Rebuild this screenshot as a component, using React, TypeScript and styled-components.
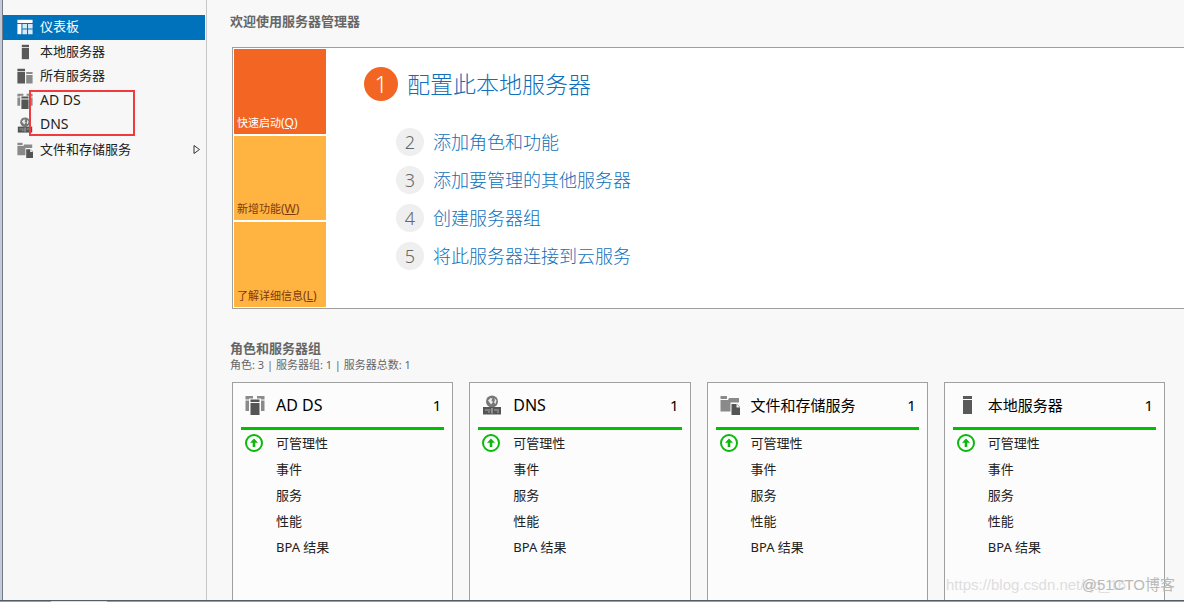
import React from "react";
import styled, { createGlobalStyle } from "styled-components";

const GlobalStyle = createGlobalStyle`
  *, *::before, *::after { box-sizing: border-box; }
  body {
    margin: 0;
    background: #f8f8f8;
    color: #222;
    font-family: "Noto Sans", "Noto Sans CJK SC", sans-serif;
    font-size: 13px;
    line-height: 16px;
  }
  h1, h2, h3, p, ul, ol { margin: 0; padding: 0; }
  ul, ol { list-style: none; }
  a { color: inherit; text-decoration: none; }
  button { font: inherit; border: 0; cursor: pointer; }
`;

/* ---------- icons ---------- */

type IconName = "dashboard" | "server" | "servers" | "adds" | "dns" | "files";

const Svg = styled.svg<{ $size: number }>`
  display: block;
  flex: none;
  width: ${(p) => p.$size}px;
  height: ${(p) => p.$size}px;
`;

const shapes: Record<IconName, React.ReactNode> = {
  dashboard: (
    <g fill="#fff">
      <path d="M0.500 1h19v4h-19z" />
      <path d="M0.500 6.200h5v12.800h-5z" />
      <path d="M6.800 6.200h5.700v5.700H6.800zM13.800 6.200h5.700v5.700h-5.700zM6.800 13h5.700v6H6.800zM13.800 13h5.700v6h-5.700z" opacity=".85" />
    </g>
  ),
  server: (
    <g fill="#595959">
      <path d="M6 1h9v3H6z" />
      <path d="M6 5h9v14H6z" />
    </g>
  ),
  servers: (
    <g>
      <path d="M0.500 1h9.500v3H0.500zM0.500 5h9.500v14.500H0.500z" fill="#595959" />
      <path d="M11.500 5h8v2.500h-8zM11.500 8.700h8v10.800h-8z" fill="#8a8a8a" />
    </g>
  ),
  adds: (
    <g>
      <path d="M0.500 1h7.500v2.500H4v1H0.500zM0.500 5.500H4V16H0.500zM12 1h7.500v3.500H16v-1h-4zM16 5.500h3.500V16H16z" fill="#8a8a8a" />
      <path d="M5.500 4.500h9v2.500h-9zM5.500 8h9v12h-9z" fill="#555" />
    </g>
  ),
  dns: (
    <g>
      <circle cx="10" cy="6.500" r="6" fill="#777" />
      <path d="M6 5.500l2.500-2.500 2 .5-1 2 1.500 1.500-2 2.500-1.500-2zM12.500 3l2 2.500-1 3.500-1.500-1.500.8-2z" fill="#e8e8e8" />
      <path d="M1 12h18v7.500H1z" fill="#555" />
      <path d="M9.500 13h1v5.500h-1z" fill="#ccc" />
      <path d="M3 15h5.500M12 15h5" stroke="#aaa" />
      <path d="M6 17h2M15 17h2" stroke="#aaa" />
    </g>
  ),
  files: (
    <g>
      <path d="M0.500 1h6.500v3H0.500z" fill="#8a8a8a" />
      <path d="M0.500 5h7.500l1-2h10v4.500h-8.500V16.500H0.500z" fill="#8a8a8a" />
      <path d="M11.500 9H17l3 3v8h-8.500z" fill="#555" />
      <path d="M16.500 8.500v4H20z" fill="#eee" />
    </g>
  ),
};

const Icon = ({ name, size }: { name: IconName; size: number }) => (
  <Svg $size={size} viewBox="0 0 20 20" aria-hidden="true">
    {shapes[name]}
  </Svg>
);

const HealthIcon = () => (
  <Svg $size={18} viewBox="0 0 18 18" aria-hidden="true">
    <circle cx="9" cy="9" r="8" fill="#fff" stroke="#0bb80b" strokeWidth="2" />
    <path d="M9 4.500L5 8.800h2.700v4.200h2.600V8.800H13z" fill="#0bb80b" />
  </Svg>
);

/* ---------- frame ---------- */

const Page = styled.div`
  position: relative;
`;

const Shell = styled.div`
  display: flex;
  flex-direction: column;
  min-height: 100vh;
`;

const Window = styled.div`
  flex: 1;
  display: flex;
  border-left: 2px solid #c3cbd9;
`;

const Taskbar = styled.div`
  height: 2px;
  padding-left: 51px;
  background: #62afd0;
  border-top: 1px solid #555c63;
`;

const TaskbarItem = styled.div`
  width: 56px;
  height: 1px;
  background: #d5dde2;
`;

/* ---------- sidebar ---------- */

const Sidebar = styled.nav`
  flex: none;
  position: relative;
  width: 205px;
  padding-top: 15px;
  background: #f7f7f7;
  border-left: 1px solid #747b86;
  border-right: 1px solid #c6c6c6;
`;

const NavList = styled.ul`
  display: grid;
  grid-auto-rows: 1fr;
  height: 147px;
`;

const NavLink = styled.a<{ $active?: boolean; $latin?: boolean }>`
  display: flex;
  align-items: center;
  gap: 7px;
  height: 100%;
  padding: 0 4px 0 14px;
  margin-right: 1px;
  font-size: ${(p) => (p.$latin ? 14 : 13)}px;
  color: ${(p) => (p.$active ? "#fff" : "#222")};
  background: ${(p) => (p.$active ? "#0072bc" : "transparent")};
`;

const NavText = styled.span`
  flex: 1;
  padding-bottom: 2px;
`;

const Highlight = styled.div`
  position: absolute;
  top: 90px;
  left: 26px;
  width: 106px;
  height: 46px;
  border: 2px solid #f03a3e;
`;

/* ---------- main ---------- */

const Main = styled.main`
  flex: 1;
  min-width: 0;
  display: flex;
  flex-direction: column;
  padding: 13px 0 0 23px;
`;

const SectionTitle = styled.h2`
  font-size: 13px;
  line-height: 16px;
  font-weight: 700;
  color: #666;
`;

const Welcome = styled.section`
  display: flex;
  margin: 18px 0 31px 2px;
  height: 262px;
  padding: 1px;
  background: #fff;
  border: 1px solid #a0a0a0;
  border-right: 0;
`;

const Tiles = styled.div`
  flex: none;
  display: grid;
  grid-auto-rows: 1fr;
  gap: 2px;
  width: 92px;
`;

const Tile = styled.button<{ $primary?: boolean }>`
  display: flex;
  align-items: flex-end;
  padding: 0 3px 3px;
  font-size: 11px;
  line-height: 16px;
  white-space: nowrap;
  color: ${(p) => (p.$primary ? "#fff" : "#7d3a0c")};
  background: ${(p) => (p.$primary ? "#f26522" : "#ffb340")};
`;

const AccessKey = styled.span`
  font-size: 12px;
`;

const Steps = styled.div`
  padding: 18px 0 0 38px;
`;

const Step = styled.a<{ $lead?: boolean }>`
  display: flex;
  align-items: center;
  gap: 9px;
  font-weight: 300;
  font-size: ${(p) => (p.$lead ? 23 : 18)}px;
  line-height: 28px;
  color: #0f6fb8;
`;

const StepNumber = styled.span<{ $lead?: boolean }>`
  display: flex;
  align-items: center;
  justify-content: center;
  width: ${(p) => (p.$lead ? 34 : 28)}px;
  height: ${(p) => (p.$lead ? 34 : 28)}px;
  border-radius: 50%;
  color: ${(p) => (p.$lead ? "#fff" : "#666")};
  background: ${(p) => (p.$lead ? "#f26522" : "#efefef")};
`;

const StepList = styled.ol`
  display: grid;
  gap: 10px;
  padding: 27px 0 0 32px;
`;

const Summary = styled.p`
  padding-top: 1px;
  font-size: 11px;
  line-height: 16px;
  color: #666;
`;

const Cards = styled.div`
  flex: 1;
  display: grid;
  grid-template-columns: repeat(4, 1fr);
  gap: 16px;
  padding: 9px 19px 0 2px;
`;

const Card = styled.section`
  padding: 0 8px 40px;
  background: #fcfcfc;
  border: 1px solid #a0a0a0;
  border-bottom: 0;
`;

const CardHeader = styled.header`
  display: flex;
  align-items: center;
  gap: 11px;
  height: 47px;
  padding: 0 3px 0 4px;
  border-bottom: 3px solid #00c000;
  color: #000;
`;

const CardTitle = styled.h3<{ $latin?: boolean }>`
  flex: 1;
  font-size: ${(p) => (p.$latin ? 16 : 15)}px;
  line-height: 20px;
  font-weight: 400;
`;

const CardCount = styled.span`
  font-size: 15px;
  line-height: 20px;
`;

const CardRow = styled.a`
  display: grid;
  grid-template-columns: 18px 1fr;
  align-items: center;
  gap: 13px;
  height: 26px;
  padding-left: 4px;
`;

const CardRowText = styled.span`
  grid-column: 2;
`;

const Watermark = styled.div`
  position: absolute;
  right: 9px;
  bottom: 7px;
  display: grid;
  width: 229px;
  font-family: "Liberation Sans", "Noto Sans CJK SC", sans-serif;
  font-size: 15px;
  line-height: 20px;
  white-space: nowrap;
  pointer-events: none;
`;

const WatermarkText = styled.span<{ $strong?: boolean }>`
  grid-area: 1 / 1;
  justify-self: ${(p) => (p.$strong ? "end" : "start")};
  color: ${(p) => (p.$strong ? "#b9b9b9" : "#dedede")};
`;

/* ---------- data ---------- */

const navItems: { icon: IconName; text: string; active?: boolean; latin?: boolean; more?: boolean }[] = [
  { icon: "dashboard", text: "仪表板", active: true },
  { icon: "server", text: "本地服务器" },
  { icon: "servers", text: "所有服务器" },
  { icon: "adds", text: "AD DS", latin: true },
  { icon: "dns", text: "DNS", latin: true },
  { icon: "files", text: "文件和存储服务", more: true },
];

const tiles = [
  { text: "快速启动", accessKey: "Q", primary: true },
  { text: "新增功能", accessKey: "W" },
  { text: "了解详细信息", accessKey: "L" },
];

const steps = ["添加角色和功能", "添加要管理的其他服务器", "创建服务器组", "将此服务器连接到云服务"];

const cards: { icon: IconName; title: string; latin?: boolean }[] = [
  { icon: "adds", title: "AD DS", latin: true },
  { icon: "dns", title: "DNS", latin: true },
  { icon: "files", title: "文件和存储服务" },
  { icon: "server", title: "本地服务器" },
];

const cardRows = ["可管理性", "事件", "服务", "性能", "BPA 结果"];

export default function App() {
  return (
    <Page>
      <GlobalStyle />
      <Shell>
        <Window>
          <Sidebar>
            <NavList>
              {navItems.map((n) => (
                <li key={n.text}>
                  <NavLink href="#" $active={n.active} $latin={n.latin}>
                    <Icon name={n.icon} size={16} />
                    <NavText>{n.text}</NavText>
                    {n.more && (
                      <Svg $size={9} viewBox="0 0 9 9" aria-hidden="true">
                        <path d="M2 0.500v8L7.500 4.500z" fill="none" stroke="#333" />
                      </Svg>
                    )}
                  </NavLink>
                </li>
              ))}
            </NavList>
            <Highlight />
          </Sidebar>
          <Main>
            <SectionTitle>欢迎使用服务器管理器</SectionTitle>
            <Welcome>
              <Tiles>
                {tiles.map((t) => (
                  <Tile key={t.text} type="button" $primary={t.primary}>
                    {t.text}
                    <AccessKey>
                      (<u>{t.accessKey}</u>)
                    </AccessKey>
                  </Tile>
                ))}
              </Tiles>
              <Steps>
                <Step href="#" $lead>
                  <StepNumber $lead>1</StepNumber>
                  配置此本地服务器
                </Step>
                <StepList>
                  {steps.map((s, i) => (
                    <li key={s}>
                      <Step href="#">
                        <StepNumber>{i + 2}</StepNumber>
                        {s}
                      </Step>
                    </li>
                  ))}
                </StepList>
              </Steps>
            </Welcome>
            <SectionTitle>角色和服务器组</SectionTitle>
            <Summary>角色: 3 | 服务器组: 1 | 服务器总数: 1</Summary>
            <Cards>
              {cards.map((c) => (
                <Card key={c.title}>
                  <CardHeader>
                    <Icon name={c.icon} size={20} />
                    <CardTitle $latin={c.latin}>{c.title}</CardTitle>
                    <CardCount>1</CardCount>
                  </CardHeader>
                  <ul>
                    {cardRows.map((r, i) => (
                      <li key={r}>
                        <CardRow href="#">
                          {i === 0 && <HealthIcon />}
                          <CardRowText>{r}</CardRowText>
                        </CardRow>
                      </li>
                    ))}
                  </ul>
                </Card>
              ))}
            </Cards>
          </Main>
        </Window>
        <Taskbar>
          <TaskbarItem />
        </Taskbar>
      </Shell>
      <Watermark>
        <WatermarkText>https://blog.csdn.net/qq_16</WatermarkText>
        <WatermarkText $strong>@51CTO博客</WatermarkText>
      </Watermark>
    </Page>
  );
}
